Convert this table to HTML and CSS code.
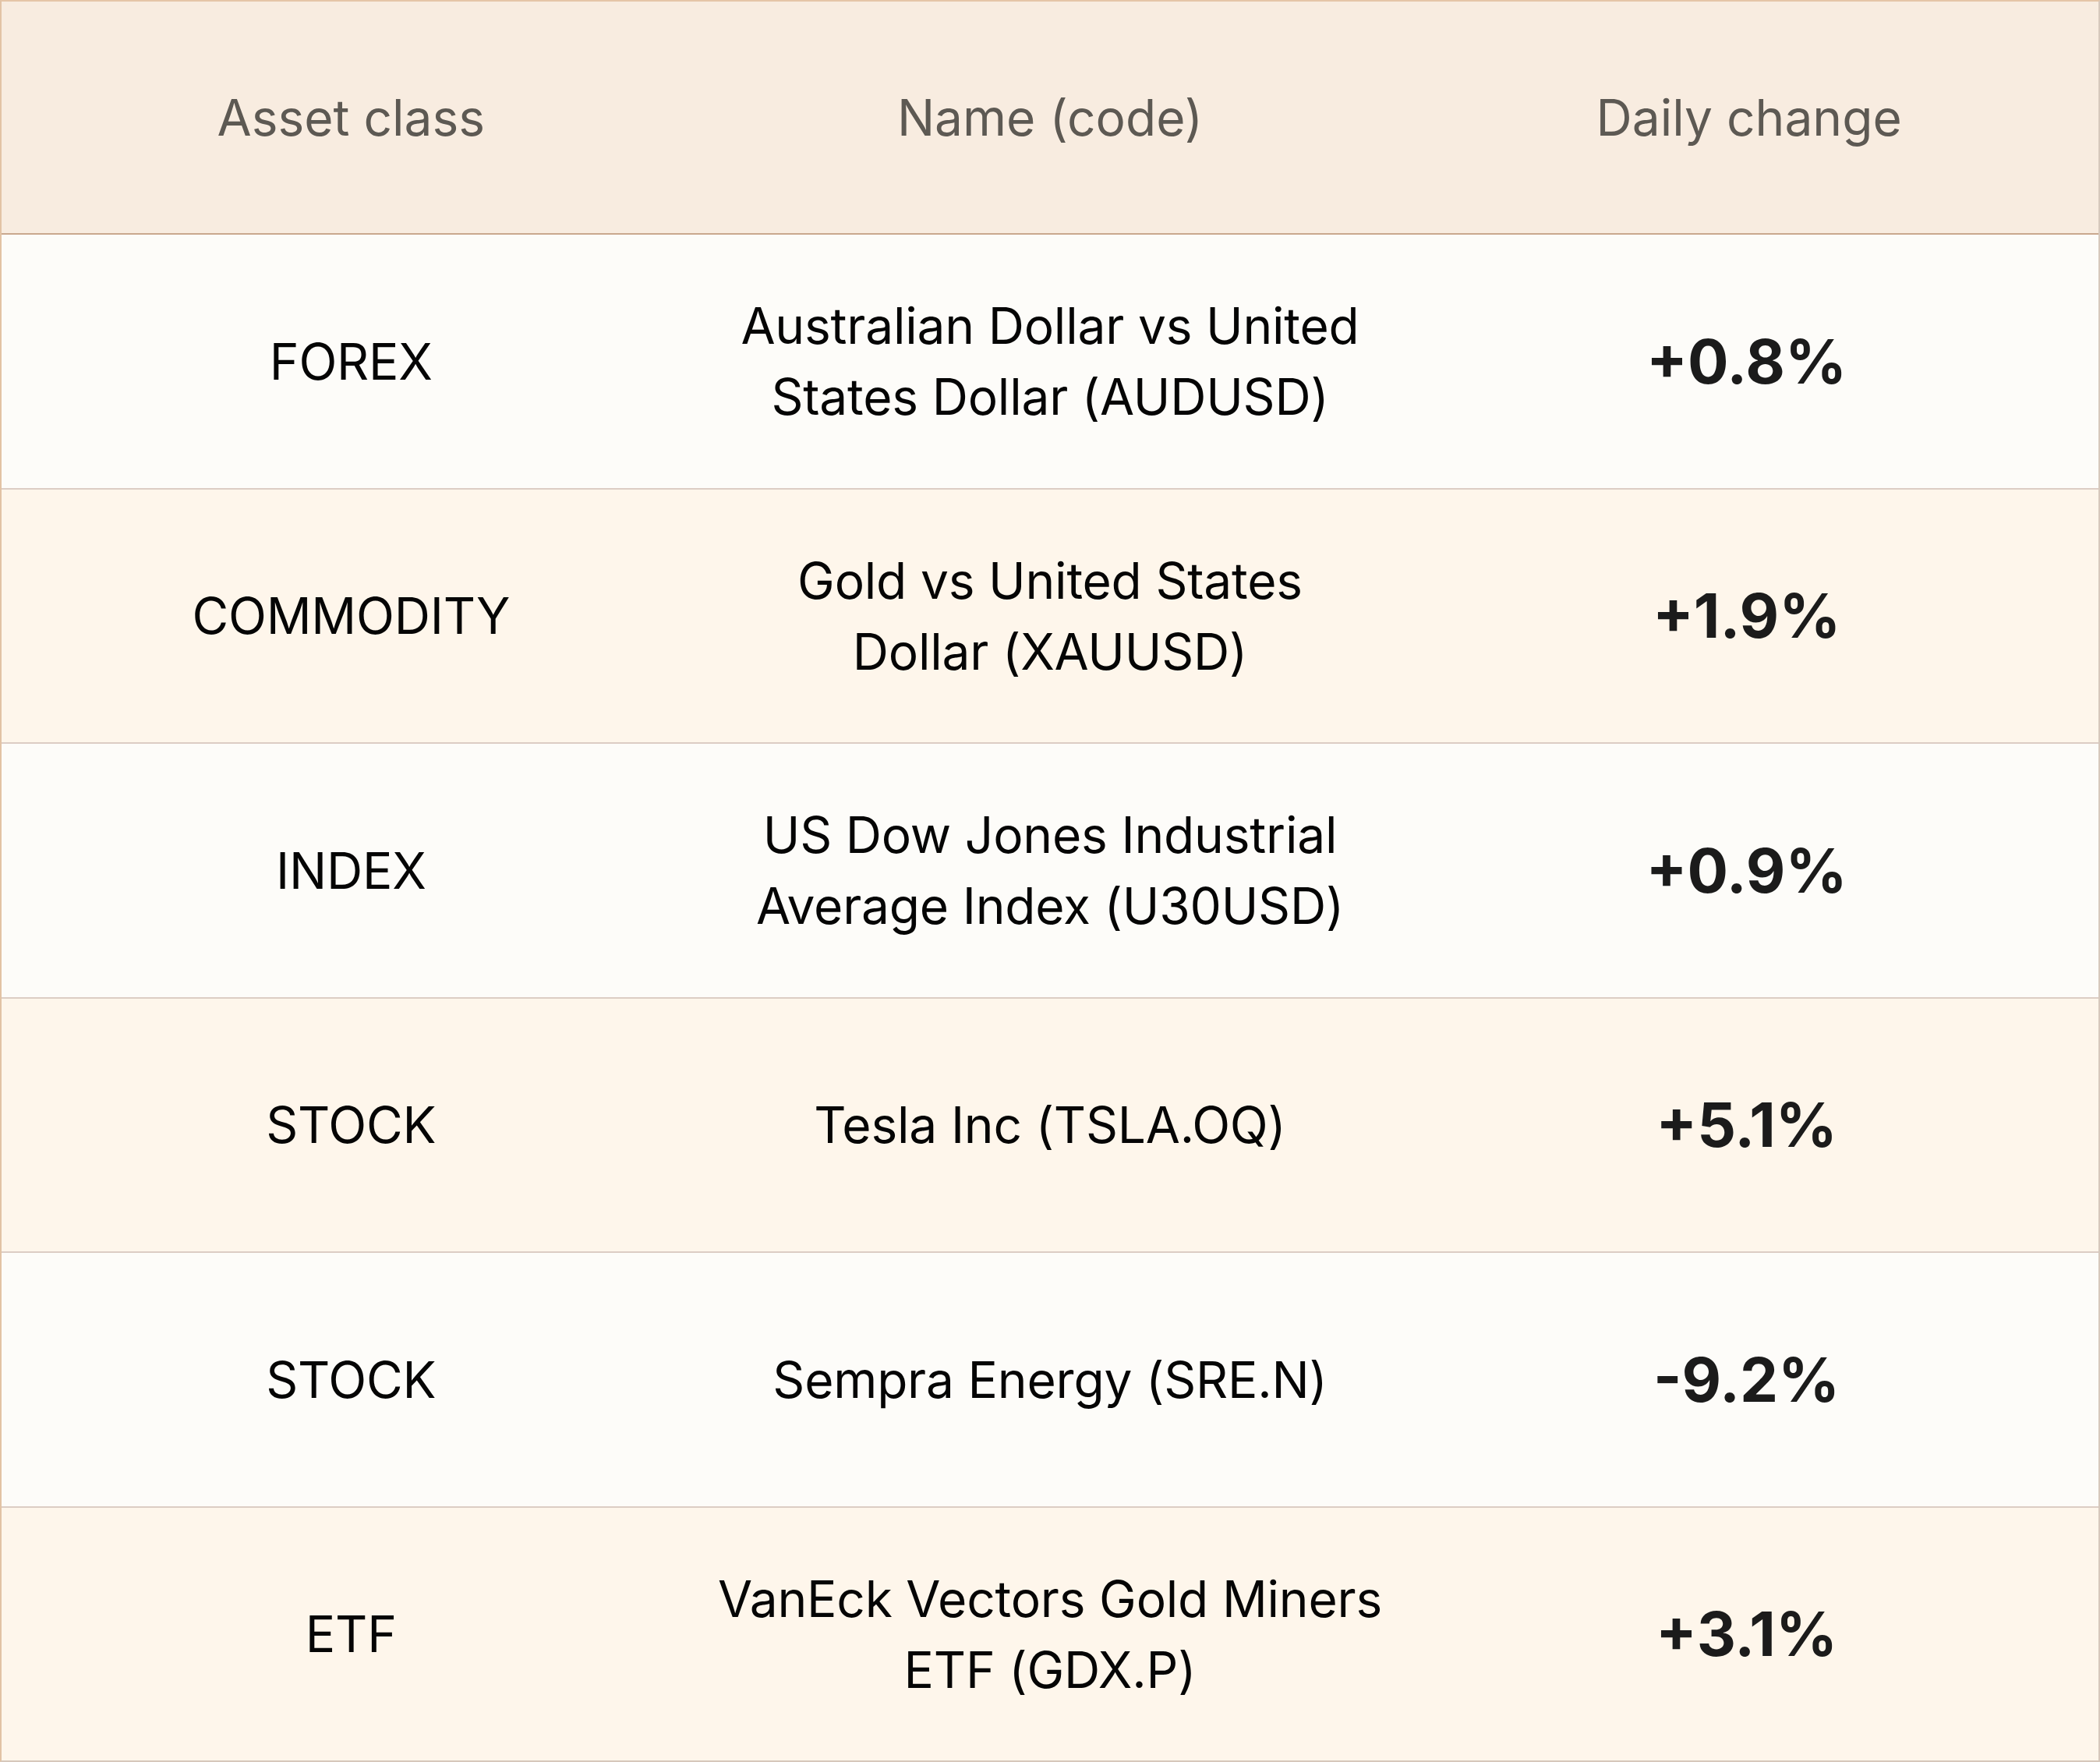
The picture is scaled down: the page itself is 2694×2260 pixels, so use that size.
FILE: index.html
```html
<!DOCTYPE html>
<html lang="en">
<head>
<meta charset="utf-8">
<title>Daily change</title>
<link rel="stylesheet" href="styles.css">
</head>
<body>
<div class="table">
  <div class="head">
    <div class="cell">Asset class</div>
    <div class="cell">Name (code)</div>
    <div class="cell">Daily change</div>
  </div>
  <div class="row light">
    <div class="cell">FOREX</div>
    <div class="cell name">Australian Dollar vs United<br>States Dollar (AUDUSD)</div>
    <div class="cell pct">+0.8%</div>
  </div>
  <div class="row cream">
    <div class="cell">COMMODITY</div>
    <div class="cell name">Gold vs United States<br>Dollar (XAUUSD)</div>
    <div class="cell pct">+1.9%</div>
  </div>
  <div class="row light">
    <div class="cell">INDEX</div>
    <div class="cell name">US Dow Jones Industrial<br>Average Index (U30USD)</div>
    <div class="cell pct">+0.9%</div>
  </div>
  <div class="row cream">
    <div class="cell">STOCK</div>
    <div class="cell name">Tesla Inc (TSLA.OQ)</div>
    <div class="cell pct">+5.1%</div>
  </div>
  <div class="row light">
    <div class="cell">STOCK</div>
    <div class="cell name">Sempra Energy (SRE.N)</div>
    <div class="cell pct">-9.2%</div>
  </div>
  <div class="row cream">
    <div class="cell">ETF</div>
    <div class="cell name">VanEck Vectors Gold Miners<br>ETF (GDX.P)</div>
    <div class="cell pct">+3.1%</div>
  </div>
</div>
</body>
</html>
```
FILE: styles.css
```css
html, body {
  margin: 0;
  padding: 0;
}
body {
  font-family: Inter, "Noto Sans", sans-serif;
  color: #050505;
  background: #fdfcf9;
}
.table {
  width: 2694px;
  height: 2260px;
  box-sizing: border-box;
  display: flex;
  flex-direction: column;
  border-style: solid;
  border-width: 2px;
  border-color: #e5c5a7 #d6c8bc #d6c8bc #e2c3a5;
}
.head {
  height: 297px;
  flex: none;
  display: grid;
  grid-template-columns: repeat(3, 1fr);
  align-items: center;
  background: #f8ece0;
  border-bottom: 2px solid #c9a88e;
  color: #5d5953;
}
.row {
  flex: 1;
  display: grid;
  grid-template-columns: repeat(3, 1fr);
  align-items: center;
}
.row + .row {
  border-top: 2px solid #dccdc4;
}
.light {
  background: #fdfcf9;
}
.cream {
  background: #fef6eb;
}
.cell {
  text-align: center;
  font-size: 64px;
  line-height: 91px;
  font-weight: 400;
  letter-spacing: -0.2px;
}
.head .cell {
  letter-spacing: 0;
}
.pct {
  font-size: 78px;
  font-weight: 700;
  color: #1b1b1b;
  letter-spacing: 0;
  padding-right: 6px;
}
```
